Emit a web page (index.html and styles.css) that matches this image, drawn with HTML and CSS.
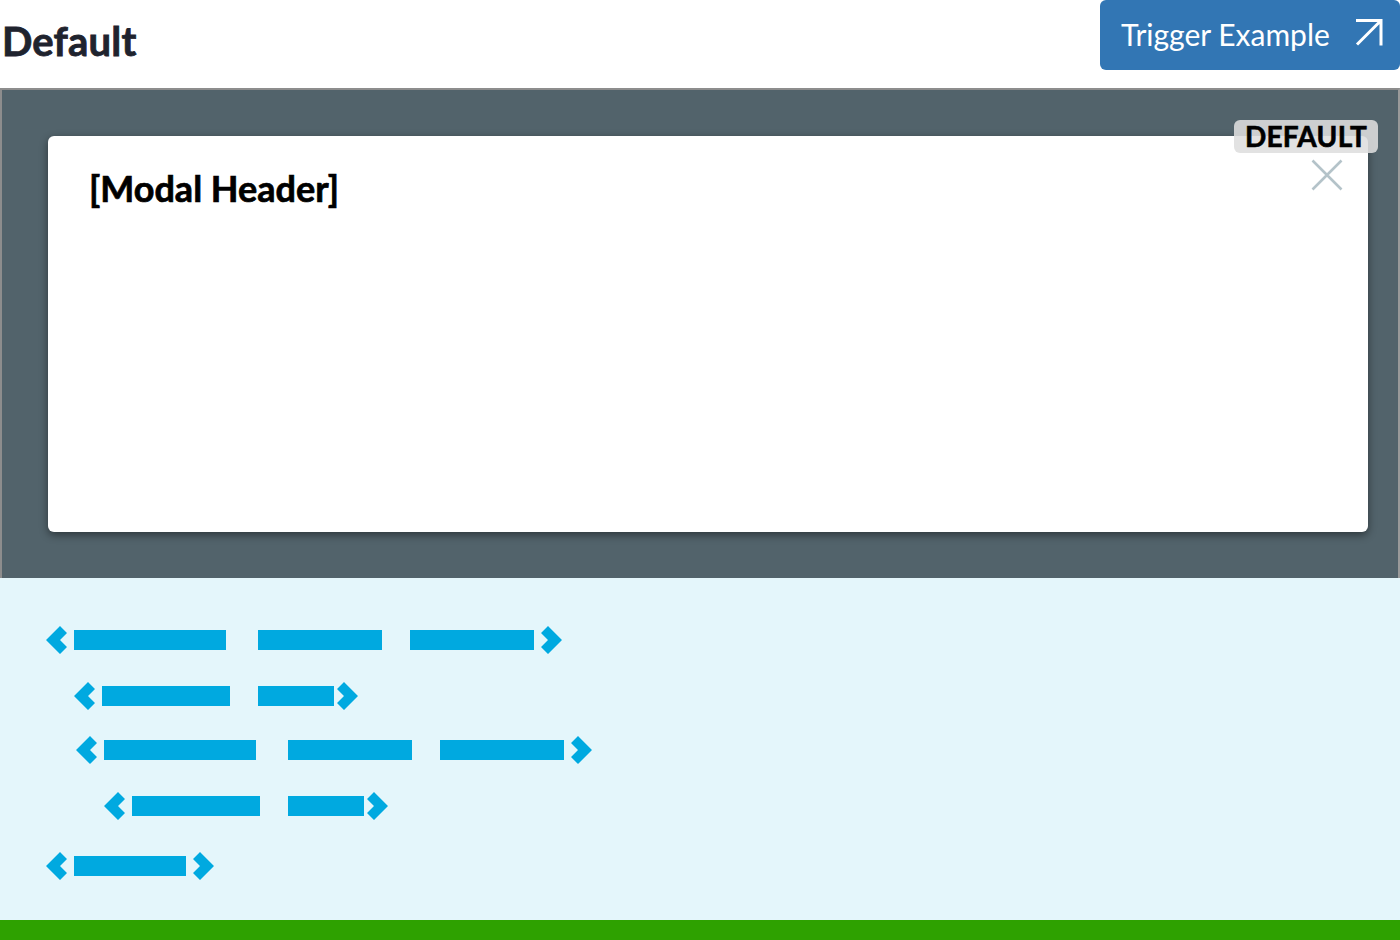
FILE: index.html
```html
<!DOCTYPE html>
<html lang="en">
<head>
<meta charset="utf-8">
<title>Default</title>
<link rel="stylesheet" href="styles.css">
</head>
<body>
<header class="top">
  <h1 class="title">Default</h1>
  <button class="trigger" type="button">
    <span class="trigger-label">Trigger Example</span>
    <svg class="trigger-icon" width="30" height="30" viewBox="0 0 30 30" aria-hidden="true">
      <path d="M2 2.5 H27 V27.5 M27 2.5 L3 26.5" fill="none" stroke="#ffffff" stroke-width="3"/>
    </svg>
  </button>
</header>

<section class="stage">
  <div class="modal">
    <h2 class="modal-header">[Modal Header]</h2>
    <svg class="modal-close" width="32" height="32" viewBox="0 0 32 32" aria-hidden="true">
      <path d="M1.5 1.5 L30.5 30.5 M30.5 1.5 L1.5 30.5" fill="none" stroke="#b4c3c9" stroke-width="2.6"/>
    </svg>
    <span class="badge">DEFAULT</span>
  </div>
</section>

<section class="skeleton">
  <div class="row row-1" style="margin-left:46px">
    <svg class="chev" viewBox="0 0 21 28"><polygon points="0,14 14,0 21,7 14,14 21,21 14,28"/></svg>
    <span class="bar" style="margin-left:7px;width:152px"></span>
    <span class="bar" style="margin-left:32px;width:124px"></span>
    <span class="bar" style="margin-left:28px;width:124px"></span>
    <svg class="chev" style="margin-left:7px" viewBox="0 0 21 28"><polygon points="21,14 7,0 0,7 7,14 0,21 7,28"/></svg>
  </div>
  <div class="row row-2" style="margin-left:74px">
    <svg class="chev" viewBox="0 0 21 28"><polygon points="0,14 14,0 21,7 14,14 21,21 14,28"/></svg>
    <span class="bar" style="margin-left:7px;width:128px"></span>
    <span class="bar" style="margin-left:28px;width:76px"></span>
    <svg class="chev" style="margin-left:3px" viewBox="0 0 21 28"><polygon points="21,14 7,0 0,7 7,14 0,21 7,28"/></svg>
  </div>
  <div class="row row-3" style="margin-left:76px">
    <svg class="chev" viewBox="0 0 21 28"><polygon points="0,14 14,0 21,7 14,14 21,21 14,28"/></svg>
    <span class="bar" style="margin-left:7px;width:152px"></span>
    <span class="bar" style="margin-left:32px;width:124px"></span>
    <span class="bar" style="margin-left:28px;width:124px"></span>
    <svg class="chev" style="margin-left:7px" viewBox="0 0 21 28"><polygon points="21,14 7,0 0,7 7,14 0,21 7,28"/></svg>
  </div>
  <div class="row row-4" style="margin-left:104px">
    <svg class="chev" viewBox="0 0 21 28"><polygon points="0,14 14,0 21,7 14,14 21,21 14,28"/></svg>
    <span class="bar" style="margin-left:7px;width:128px"></span>
    <span class="bar" style="margin-left:28px;width:76px"></span>
    <svg class="chev" style="margin-left:3px" viewBox="0 0 21 28"><polygon points="21,14 7,0 0,7 7,14 0,21 7,28"/></svg>
  </div>
  <div class="row row-5" style="margin-left:46px">
    <svg class="chev" viewBox="0 0 21 28"><polygon points="0,14 14,0 21,7 14,14 21,21 14,28"/></svg>
    <span class="bar" style="margin-left:7px;width:112px"></span>
    <svg class="chev" style="margin-left:7px" viewBox="0 0 21 28"><polygon points="21,14 7,0 0,7 7,14 0,21 7,28"/></svg>
  </div>
</section>

<footer class="footer-bar"></footer>
</body>
</html>
```

FILE: styles.css
```css
* { box-sizing: border-box; }

html, body {
  margin: 0;
  padding: 0;
  width: 1400px;
  height: 940px;
  overflow: hidden;
  background: #ffffff;
  font-family: Lato, "Open Sans", "Liberation Sans", sans-serif;
}

.top {
  height: 88px;
  display: flex;
  justify-content: space-between;
  align-items: flex-start;
}

.title {
  margin: 17px 0 0 2px;
  font-size: 40px;
  line-height: 48px;
  font-weight: 700;
  color: #1f232e;
  -webkit-text-stroke: 0.8px #1f232e;
  letter-spacing: 0.2px;
}

.trigger {
  width: 300px;
  height: 70px;
  border: 0;
  border-radius: 6px;
  background: #3276b4;
  color: #ffffff;
  display: flex;
  align-items: center;
  padding: 0 16px 0 21px;
  font-family: inherit;
  cursor: pointer;
}

.trigger-label {
  font-size: 30px;
  line-height: 40px;
  font-weight: 400;
  margin-top: -2px;
}

.trigger-icon {
  margin-left: auto;
  margin-top: -4px;
}

.stage {
  height: 490px;
  background: #52636b;
  border-top: 2px solid #8d8d8d;
  border-left: 2px solid #8d8d8d;
  border-right: 2px solid #9a9a9a;
  padding: 46px 0 0 46px;
}

.modal {
  position: relative;
  width: 1320px;
  height: 396px;
  background: #ffffff;
  border-radius: 6px;
  box-shadow: 0 3px 8px rgba(0, 0, 0, 0.45);
  padding: 30px 41px;
}

.modal-header {
  margin: 0;
  font-size: 36px;
  line-height: 44px;
  font-weight: 700;
  color: #000000;
  -webkit-text-stroke: 0.7px #000000;
}

.modal-close {
  position: absolute;
  top: 23px;
  right: 25px;
}

.badge {
  position: absolute;
  top: -16px;
  right: -10px;
  width: 144px;
  height: 33px;
  border-radius: 6px;
  background: rgba(222, 222, 222, 0.88);
  color: #000000;
  font-size: 28px;
  line-height: 33px;
  font-weight: 700;
  text-align: center;
  -webkit-text-stroke: 0.6px #000000;
  letter-spacing: 0.3px;
}

.skeleton {
  height: 342px;
  background: #e4f6fb;
  padding-top: 48px;
}

.row {
  display: flex;
  align-items: center;
  height: 28px;
}

.row-2 { margin-top: 28px; }
.row-3 { margin-top: 26px; }
.row-4 { margin-top: 28px; }
.row-5 { margin-top: 32px; }

.chev {
  width: 21px;
  height: 28px;
  fill: #00a9e0;
  flex: none;
}

.bar {
  display: block;
  height: 20px;
  background: #00a9e0;
  flex: none;
}

.footer-bar {
  height: 20px;
  background: #2ea100;
}
```
